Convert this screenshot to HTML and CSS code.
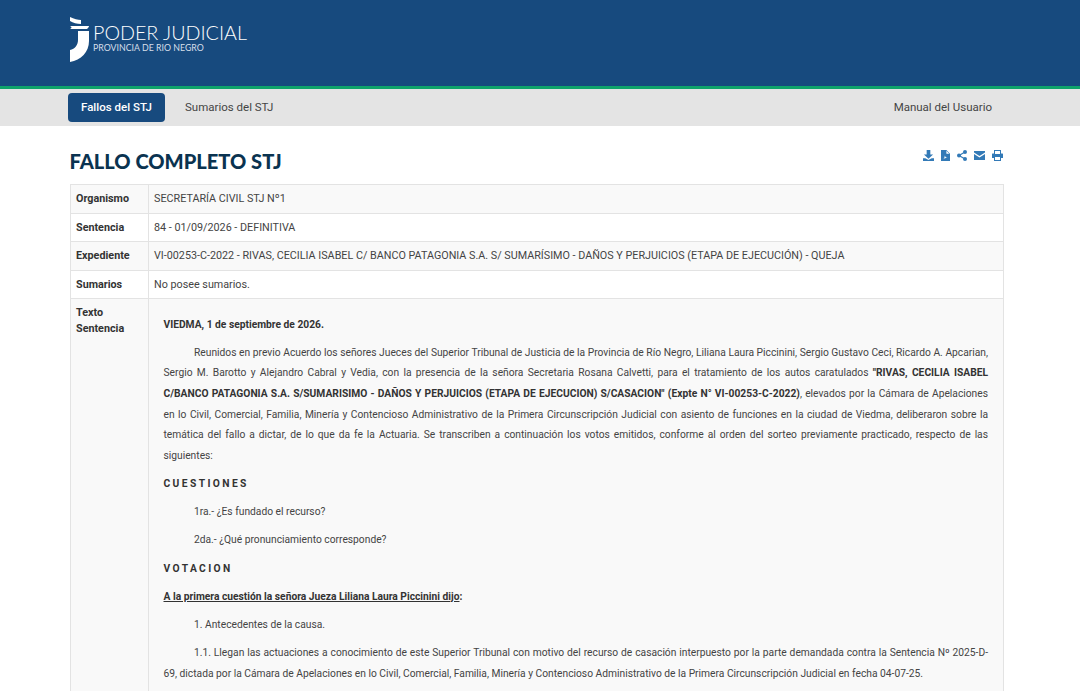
FILE: index.html
```html
<!DOCTYPE html>
<html lang="es">
<head>
    <meta charset="UTF-8">
    <meta name="viewport" content="width=device-width, initial-scale=1.0">
    <title>Fallo completo STJ - Poder Judicial</title>
    <link rel="stylesheet" href="styles.css">
</head>
<body>
<div class="page">
    <header class="top">
        <a href="#" class="brand">
            <svg class="brand-mark" width="20" height="46" viewBox="0 0 20 46">
                <path d="M0 1 C4 3 8 4 11 4 L11 8 C7 8 3 7 0 5 Z" fill="#fff"/>
                <path d="M0 10 L19 10 C19 11 18 12 17 13 L0 13 C2 12 2 11 0 10 Z" fill="#fff"/>
                <path d="M8 15 L19 15 L19 25 C19 36 11 44 0 46 L0 34 C5 33 8 29 8 24 Z" fill="#fff"/>
            </svg>
            <span class="brand-text">
                <span class="brand-name">PODER JUDICIAL</span>
                <span class="brand-sub">PROVINCIA DE RIO NEGRO</span>
            </span>
        </a>
    </header>

    <nav class="menu">
        <div class="menu-left">
            <a href="#" class="menu-item active">Fallos del STJ</a>
            <a href="#" class="menu-item">Sumarios del STJ</a>
        </div>
        <a href="#" class="menu-item">Manual del Usuario</a>
    </nav>

    <main class="container">
        <div class="title-row">
            <h1>FALLO COMPLETO STJ</h1>
            <div class="tools">
                <svg width="11" height="11" viewBox="0 0 12 12"><path d="M4 0h4v5h3L6 9.500 1 5h3zM0 9h2.500L6 11l3.500-2H12v3H0z" fill="#337ab7"/></svg>
                <svg width="9" height="11" viewBox="0 0 10 12"><path d="M0 0h6l4 4v8H0zM6 .8V4h3.200zM2 10.500c1.500-.8 2-2.500 2.300-4.500.5 1.500 1.200 2.400 3.200 2.800-2-.1-3.700.4-5.500 1.700z" fill="#337ab7" fill-rule="evenodd"/></svg>
                <svg width="10" height="11" viewBox="0 0 10 11"><circle cx="8" cy="2" r="2" fill="#337ab7"/><circle cx="2" cy="5.500" r="2" fill="#337ab7"/><circle cx="8" cy="9" r="2" fill="#337ab7"/><path d="M8 2 2 5.500 8 9" stroke="#337ab7" stroke-width="1.200" fill="none"/></svg>
                <svg width="11" height="9" viewBox="0 0 11 9"><path d="M0 0h11v1.500L5.500 5 0 1.500zM0 3l5.500 3.500L11 3v6H0z" fill="#337ab7"/></svg>
                <svg width="11" height="11" viewBox="0 0 11 11"><path d="M2 0h7v3.500h1.500A.5.500 0 0 1 11 4v4H9v3H2V8H0V4a.5.500 0 0 1 .5-.5H2zM3 1v3h5V1zM3 7v3h5V7z" fill="#337ab7" fill-rule="evenodd"/></svg>
            </div>
        </div>

        <table class="ficha">
            <tr class="odd">
                <th>Organismo</th>
                <td>SECRETARÍA CIVIL STJ Nº1</td>
            </tr>
            <tr>
                <th>Sentencia</th>
                <td>84 - 01/09/2026 - DEFINITIVA</td>
            </tr>
            <tr class="odd">
                <th>Expediente</th>
                <td>VI-00253-C-2022 - RIVAS, CECILIA ISABEL C/ BANCO PATAGONIA S.A. S/ SUMARÍSIMO - DAÑOS Y PERJUICIOS (ETAPA DE EJECUCIÓN) - QUEJA</td>
            </tr>
            <tr>
                <th>Sumarios</th>
                <td>No posee sumarios.</td>
            </tr>
            <tr class="odd">
                <th>Texto Sentencia</th>
                <td class="texto">
                    <p><strong>VIEDMA, 1 de septiembre de 2026.</strong></p>
                    <p class="sangria">Reunidos en previo Acuerdo los señores Jueces del Superior Tribunal de Justicia de la Provincia de Río Negro, Liliana Laura Piccinini, Sergio Gustavo Ceci, Ricardo A. Apcarian, Sergio M. Barotto y Alejandro Cabral y Vedia, con la presencia de la señora Secretaria Rosana Calvetti, para el tratamiento de los autos caratulados <strong>"RIVAS, CECILIA ISABEL C/BANCO&nbsp;PATAGONIA S.A. S/SUMARISIMO - DAÑOS Y PERJUICIOS (ETAPA DE EJECUCION) S/CASACION" (Expte N° VI-00253-C-2022)</strong>, elevados por la Cámara de Apelaciones en lo Civil, Comercial, Familia, Minería y Contencioso Administrativo de la Primera Circunscripción Judicial con asiento de funciones en la ciudad de Viedma, deliberaron sobre la temática del fallo a dictar, de lo que da fe la Actuaria. Se transcriben a continuación los votos emitidos, conforme al orden del sorteo previamente practicado, respecto de las siguientes:</p>
                    <p class="espaciado">CUESTIONES</p>
                    <p class="sangria">1ra.- ¿Es fundado el recurso?</p>
                    <p class="sangria">2da.- ¿Qué pronunciamiento corresponde?</p>
                    <p class="espaciado">VOTACION</p>
                    <p><strong class="subrayado">A la primera cuestión la señora Jueza Liliana Laura Piccinini dijo</strong><strong>:</strong></p>
                    <p class="sangria">1. Antecedentes de la causa.</p>
                    <p class="sangria">1.1. Llegan las actuaciones a conocimiento de este Superior Tribunal con motivo del recurso de casación interpuesto por la parte demandada contra la Sentencia Nº 2025-D-69, dictada por la Cámara de Apelaciones en lo Civil, Comercial, Familia, Minería y Contencioso Administrativo de la Primera Circunscripción Judicial en fecha 04-07-25.</p>
                </td>
            </tr>
        </table>
    </main>
</div>
</body>
</html>
```

FILE: styles.css
```css
html, body {
    margin: 0;
    padding: 0;
}
body {
    background: #fff;
    color: #444;
    font-family: 'Roboto', sans-serif;
    font-size: 10.77px;
}
.page {
    height: 100vh;
    overflow: hidden;
}
a {
    text-decoration: none;
}
.top {
    background: #174a7e;
    height: 86px;
    border-bottom: 3px solid #0fa36b;
    padding-left: 70px;
}
.brand {
    display: inline-flex;
    align-items: flex-start;
    gap: 3px;
    padding-top: 16px;
    color: #fff;
}
.brand-text {
    display: flex;
    flex-direction: column;
    padding-top: 6px;
}
.brand-name {
    font-family: 'Lato', sans-serif;
    font-weight: 300;
    font-size: 19.7px;
    line-height: 21px;
}
.brand-sub {
    font-family: 'Lato', sans-serif;
    font-size: 8.8px;
    line-height: 9px;
    color: #d5dfea;
}
.menu {
    background: #e4e4e4;
    height: 37px;
    display: flex;
    justify-content: space-between;
    align-items: center;
    padding: 0 75px 0 68px;
}
.menu-left {
    display: flex;
    gap: 7px;
}
.menu-item {
    display: block;
    color: #444;
    font-size: 11.5px;
    line-height: 28px;
    padding: 0 13px 1px;
}
.menu-item.active {
    background: #174a7e;
    color: #fff;
    font-weight: 500;
    border-radius: 4px;
}
.container {
    padding: 0 76px 0 70px;
}
.title-row {
    display: flex;
    justify-content: space-between;
    height: 58px;
}
.title-row h1 {
    font-family: 'Lato', sans-serif;
    font-weight: 900;
    font-size: 20.1px;
    line-height: 28px;
    color: #0a3350;
    margin: 21px 0 0 -0.5px;
}
.tools {
    display: flex;
    align-items: center;
    gap: 7px;
    height: 12px;
    margin: 23px 1px 0 0;
}
.ficha {
    width: 100%;
    border-collapse: collapse;
    table-layout: fixed;
}
.ficha th, .ficha td {
    border: 1px solid #e3e3e3;
    text-align: left;
    vertical-align: top;
    padding: 6px 5px;
    line-height: 15.5px;
}
.ficha th {
    width: 67px;
    color: #333;
    font-weight: 700;
}
.ficha tr.odd th, .ficha tr.odd td {
    background: #f9f9f9;
}
.ficha td.texto {
    font-size: 10.25px;
    padding: 8px 15px 40px 14.5px;
}
.texto p {
    margin: 7.6px 0 0;
    line-height: 20.6px;
    text-align: justify;
}
.texto strong, .texto .espaciado {
    color: #333;
}
.texto .sangria {
    text-indent: 30.5px;
}
.texto .espaciado {
    font-weight: 700;
    letter-spacing: 2.4px;
}
.subrayado {
    text-decoration: underline;
}
```
